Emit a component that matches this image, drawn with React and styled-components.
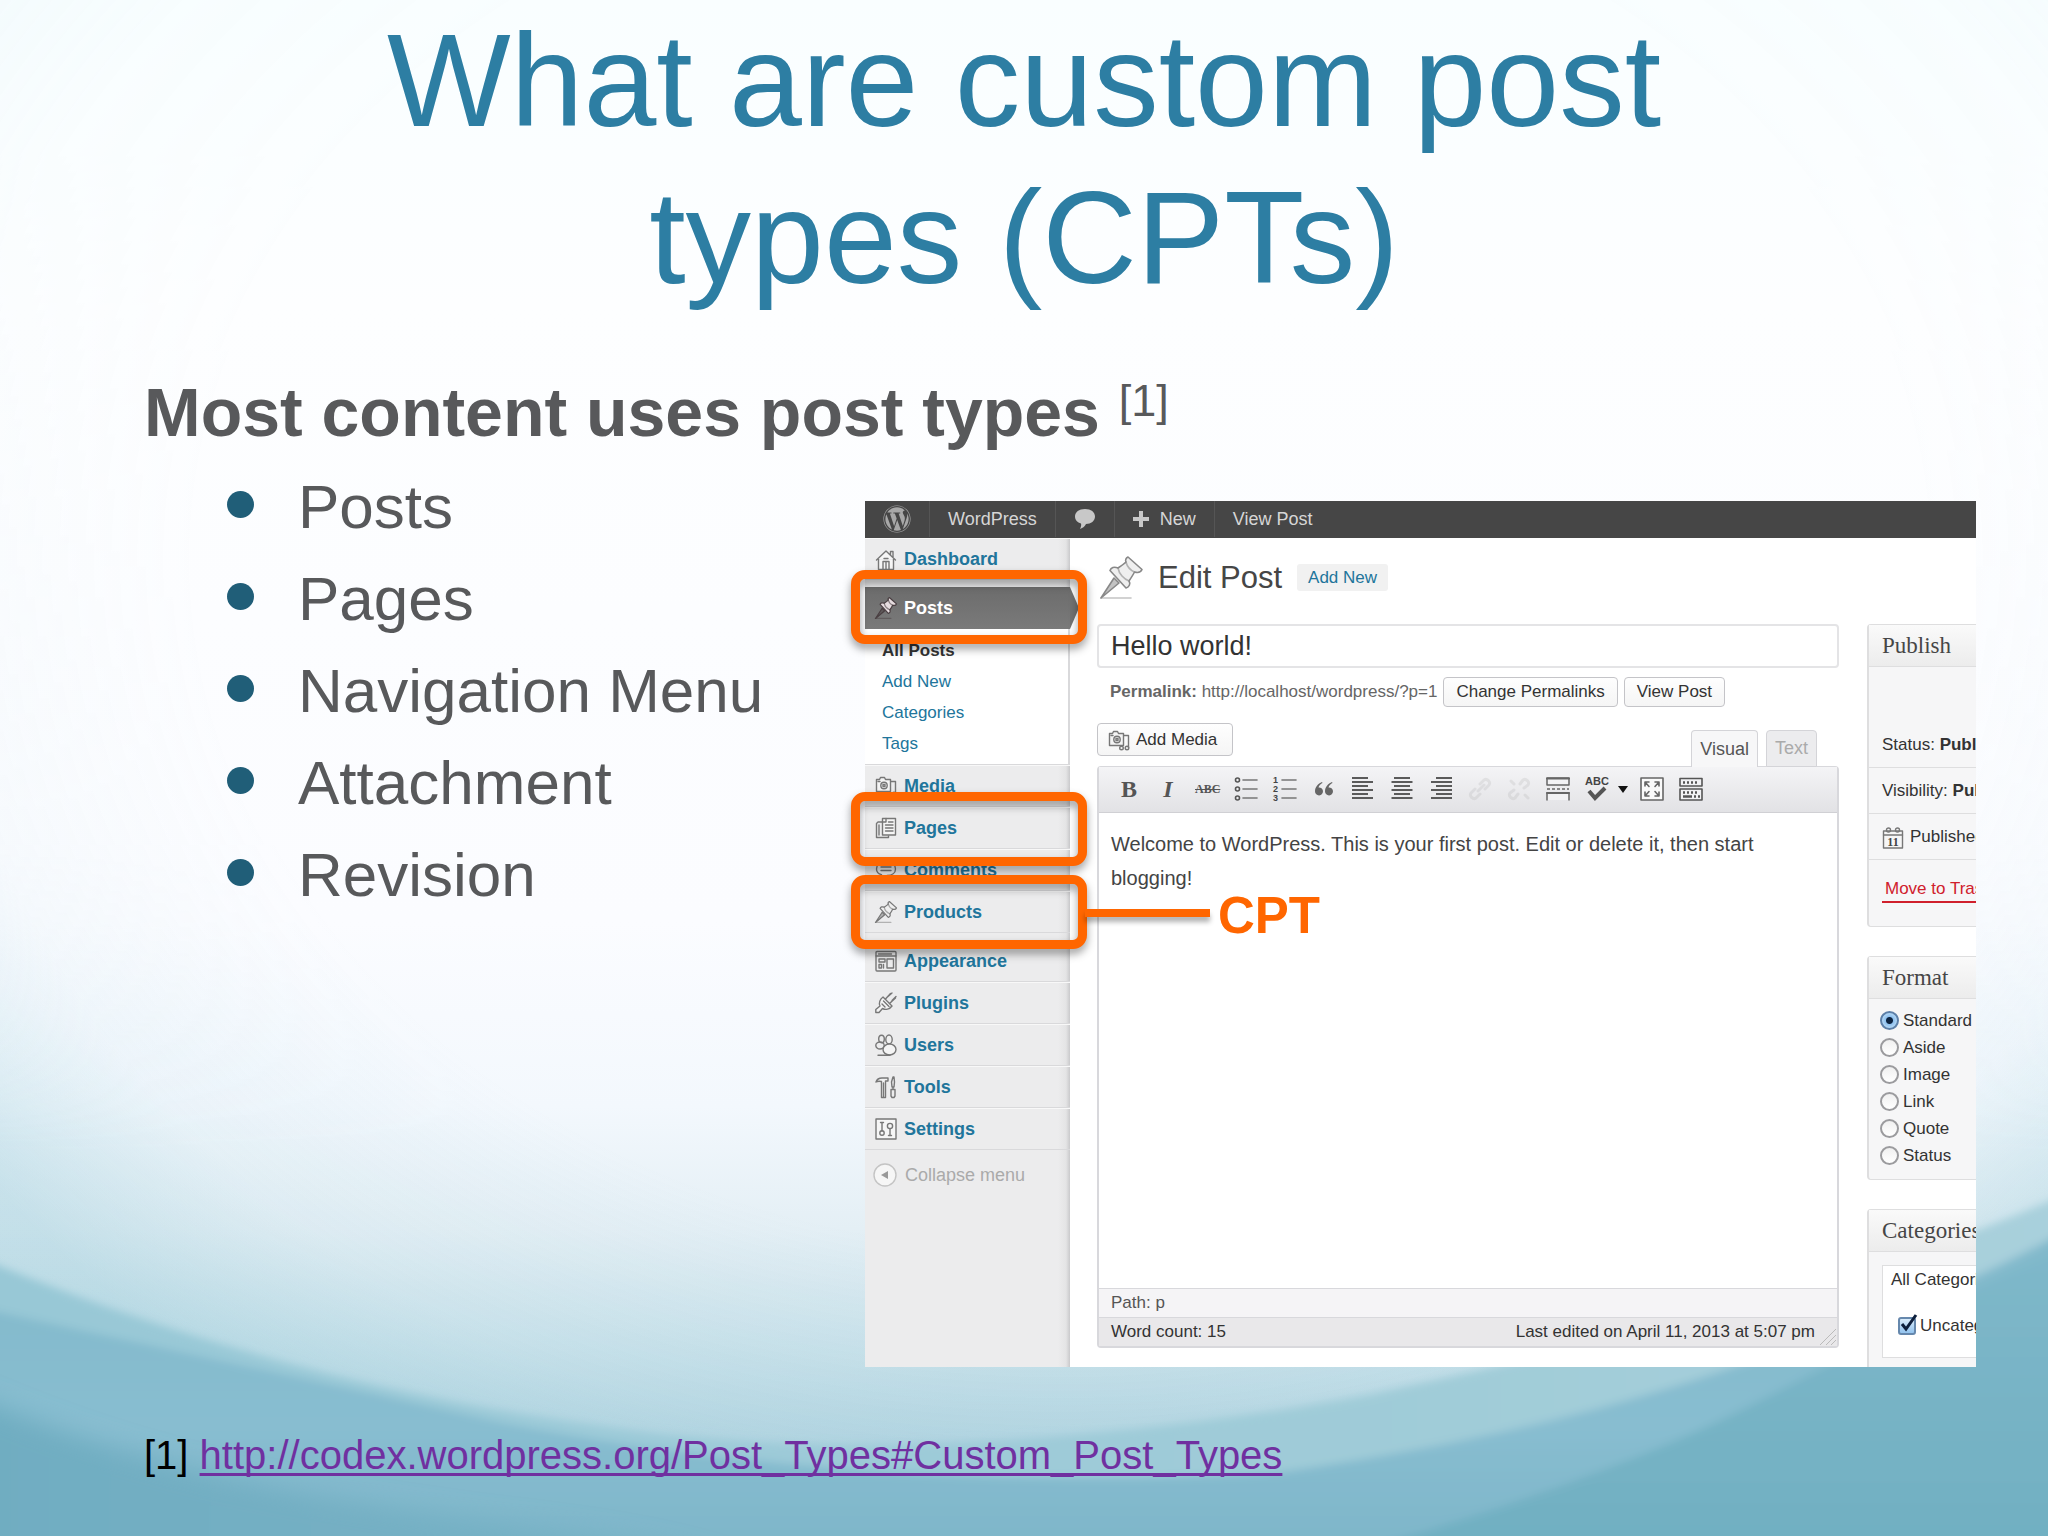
import React from "react";
import styled, { createGlobalStyle, css } from "styled-components";
import { FaWordpress } from "react-icons/fa";

const sans = `"Liberation Sans", Arial, Helvetica, sans-serif`;
const serif = `"Liberation Serif", "Times New Roman", serif`;
const orange = "#ff6600";
const linkBlue = "#21759b";

const GlobalStyle = createGlobalStyle`
  *, *::before, *::after { box-sizing: border-box; }
  body { margin: 0; font-family: ${sans}; }
  button, input, textarea { font-family: inherit; }
`;

/* ---------- slide ---------- */

const Slide = styled.main`
  position: relative;
  min-height: 100vh;
  overflow: hidden;
  padding: 2px 72px 0 144px;
  background: #fdfefe;
`;

const Waves = styled.svg`
  position: absolute;
  inset: 0;
  width: 100%;
  height: 100%;
`;

const Content = styled.div`
  position: relative;
`;

const Title = styled.h1`
  max-width: 1400px;
  margin: 0 auto 57px;
  padding-right: 72px;
  box-sizing: content-box;
  color: #2d7ea3;
  font-size: 131px;
  font-weight: 400;
  line-height: 157px;
  text-align: center;
`;

const Heading = styled.h2`
  margin: 0 0 10px;
  color: #58595b;
  font-size: 68px;
  line-height: 78px;
`;

const Reference = styled.sup`
  font-size: 45px;
  font-weight: 400;
  line-height: 0;
  vertical-align: 20px;
`;

const Columns = styled.div`
  display: grid;
  grid-template-columns: minmax(0, 721fr) minmax(0, 1111fr);
  align-items: start;
`;

const Bullets = styled.ul`
  margin: 0;
  padding: 0 0 0 83px;
  list-style: none;
`;

const Bullet = styled.li`
  display: flex;
  align-items: center;
  gap: 44px;
  color: #58595b;
  font-size: 62px;
  line-height: 92px;
  &::before {
    content: "";
    flex: none;
    width: 27px;
    height: 27px;
    margin-bottom: 6px;
    border-radius: 50%;
    background: #205e78;
  }
`;

const Footnote = styled.p`
  margin: 65px 0 0;
  color: #000;
  font-size: 40px;
  line-height: 46px;
`;

const FootLink = styled.a`
  color: #7030a0;
  text-decoration: underline;
  text-decoration-thickness: 3px;
  text-decoration-skip-ink: none;
  text-underline-offset: 4px;
`;

/* ---------- annotated admin screen ---------- */

const Figure = styled.figure`
  position: relative;
  margin: 40px 0 0;
`;

const Screen = styled.div`
  overflow: hidden;
  background: #fff;
  color: #333;
  font-size: 17px;
  line-height: 24px;
`;

const Highlight = styled.div`
  position: absolute;
  top: ${(p) => p.$top}px;
  left: -14px;
  width: 236px;
  height: 74px;
  border: 9px solid ${orange};
  border-radius: 14px;
  pointer-events: none;
  filter: drop-shadow(0 5px 4px rgba(0, 0, 0, 0.38));
`;

const Connector = styled.div`
  position: absolute;
  top: 408px;
  left: 220px;
  width: 125px;
  height: 8px;
  background: ${orange};
  box-shadow: 0 5px 5px rgba(0, 0, 0, 0.3);
`;

const Callout = styled.figcaption`
  position: absolute;
  top: 386px;
  left: 353px;
  color: ${orange};
  font-size: 51px;
  font-weight: 700;
  line-height: 58px;
`;

const AdminBar = styled.header`
  display: flex;
  height: 37px;
  padding-bottom: 1px;
  background: #464646;
`;

const BarLink = styled.a`
  display: flex;
  align-items: center;
  gap: 11px;
  padding: 0 18px;
  border-left: 1px solid #555;
  color: #d6d6d6;
  font-size: 18px;
  text-decoration: none;
  white-space: nowrap;
  &:first-child { border-left: 0; }
`;

const AdminBody = styled.div`
  display: grid;
  grid-template-columns: 205px minmax(0, 1fr);
`;

const Sidebar = styled.nav`
  background: linear-gradient(to left, #c9c9cb 0, #e4e4e5 4px, #ececed 12px);
`;

const MenuGroup = styled.ul`
  margin: 0 0 7px;
  padding: 0;
  list-style: none;
`;

const MenuLink = styled.a`
  position: relative;
  display: flex;
  align-items: center;
  gap: 7px;
  height: 42px;
  padding: 0 10px;
  border-bottom: 1px solid #d9d9db;
  box-shadow: inset 0 1px 0 #f8f8f8;
  color: ${linkBlue};
  font-size: 18px;
  font-weight: 700;
  text-decoration: none;
  ${(p) =>
    p.$current &&
    css`
      border: 0;
      box-shadow: none;
      background: linear-gradient(#6c6c6c, #7a7a7a);
      color: #fff;
      &::after {
        content: "";
        position: absolute;
        top: 0;
        left: 100%;
        border: solid transparent;
        border-width: 21px 0 21px 9px;
        border-left-color: #727272;
      }
    `}
`;

const SubMenu = styled.ul`
  margin: 0;
  padding: 6px 0 5px 17px;
  border-right: 2px solid #d9d9db;
  border-bottom: 1px solid #d9d9db;
  background: #fff;
  list-style: none;
`;

const SubLink = styled.a`
  display: block;
  color: ${(p) => (p.$current ? "#333" : linkBlue)};
  font-weight: ${(p) => (p.$current ? 700 : 400)};
  line-height: 31px;
  text-decoration: none;
`;

const CollapseButton = styled.button`
  display: flex;
  align-items: center;
  gap: 8px;
  margin: 12px 0 0;
  padding: 0 8px;
  border: 0;
  background: none;
  color: #aaa;
  font-size: 18px;
  line-height: 26px;
`;

const Workspace = styled.section`
  padding: 18px 0 0 27px;
`;

const PageHead = styled.div`
  display: flex;
  align-items: center;
  height: 43px;
  margin-bottom: 25px;
  padding-left: 3px;
`;

const PageTitle = styled.h3`
  margin: 0 15px;
  color: #464646;
  font-size: 31px;
  font-weight: 400;
  line-height: 36px;
`;

const AddNew = styled.a`
  padding: 0 11px;
  border-radius: 3px;
  background: #f1f1f1;
  color: ${linkBlue};
  line-height: 27px;
  text-decoration: none;
`;

const EditGrid = styled.div`
  display: grid;
  grid-template-columns: minmax(0, 1fr) 109px;
  gap: 28px;
`;

const TitleInput = styled.input`
  display: block;
  width: 100%;
  height: 44px;
  padding: 0 12px;
  border: 2px solid #e4e4e6;
  border-radius: 4px;
  color: #333;
  font-size: 27px;
`;

const Permalink = styled.div`
  display: flex;
  align-items: center;
  gap: 6px;
  margin: 9px 0 16px;
  padding-left: 13px;
  color: #666;
  white-space: nowrap;
`;

const Button = styled.button`
  display: flex;
  align-items: center;
  gap: 6px;
  height: ${(p) => (p.$tall ? 33 : 30)}px;
  padding: 0 ${(p) => (p.$tall ? "15px 0 10px" : "12px")};
  border: 1px solid #c4c4c8;
  border-radius: 4px;
  background: linear-gradient(#fefefe, #f5f5f5);
  color: #333;
  font-size: 17px;
`;

const EditorTop = styled.div`
  display: flex;
  align-items: flex-start;
  height: 43px;
`;

const Tabs = styled.div`
  display: flex;
  align-self: flex-end;
  gap: 8px;
  margin: 0 22px -1px auto;
`;

const Tab = styled.button`
  height: 37px;
  padding: 0 8px;
  border: 1px solid #d4d4d8;
  border-bottom: ${(p) => (p.$active ? "0" : "1px solid #d4d4d8")};
  border-radius: 4px 4px 0 0;
  background: ${(p) => (p.$active ? "#f7f7f8" : "#ececee")};
  color: ${(p) => (p.$active ? "#555" : "#aaa")};
  font-size: 18px;
`;

const Editor = styled.div`
  border: 2px solid #d8d8dc;
  border-top-width: 1px;
  border-radius: 4px;
`;

const Toolbar = styled.div`
  display: flex;
  align-items: center;
  gap: 15px;
  height: 46px;
  padding: 0 0 1px 18px;
  border-bottom: 1px solid #d0d0d4;
  background: linear-gradient(#f4f4f6, #e2e2e5);
`;

const Tool = styled.button`
  display: grid;
  place-items: center;
  flex: none;
  width: ${(p) => (p.$narrow ? 10 : 24)}px;
  height: 24px;
  padding: 0;
  border: 0;
  background: none;
  color: #555;
  font-family: ${serif};
  font-size: ${(p) => (p.$small ? 12 : 24)}px;
  font-weight: 700;
  font-style: ${(p) => (p.$italic ? "italic" : "normal")};
  text-decoration: ${(p) => (p.$small ? "line-through" : "none")};
  line-height: 24px;
  opacity: ${(p) => (p.disabled ? 0.14 : 1)};
`;

const ToolPair = styled.div`
  display: flex;
  gap: 9px;
  width: 40px;
`;

const PostText = styled.textarea`
  display: block;
  width: 100%;
  height: 475px;
  padding: 14px 12px;
  border: 0;
  resize: none;
  background: #fff;
  color: #444;
  font-size: 20px;
  line-height: 34px;
`;

const StatusRow = styled.div`
  display: flex;
  align-items: center;
  justify-content: space-between;
  height: 29px;
  padding: 0 22px 0 12px;
  border-top: 1px solid #d8d8dc;
  background: ${(p) => (p.$dark ? "#e9e8ea" : "#f5f4f6")};
  color: ${(p) => (p.$dark ? "#333" : "#555")};
`;

const ResizeMark = styled.svg`
  position: absolute;
  right: 1px;
  bottom: 1px;
`;

const StatusWrap = styled.div`
  position: relative;
`;

const MainColumn = styled.div`
  padding-bottom: 18px;
`;

const SideColumn = styled.aside`
  display: flex;
  flex-direction: column;
  gap: 29px;
  overflow: hidden;
  white-space: nowrap;
`;

const PostBox = styled.section`
  border: solid #dededf;
  border-width: 1px 0 ${(p) => (p.$open ? "0" : "1px")} 2px;
  border-radius: 4px 0 0 ${(p) => (p.$open ? "0" : "4px")};
  background: #f6f6f7;
`;

const BoxTitle = styled.h4`
  margin: 0;
  padding-left: 13px;
  border-bottom: 1px solid #dededf;
  background: linear-gradient(#fafafa, #ececec);
  color: #464646;
  font-family: ${serif};
  font-size: 23px;
  font-weight: 400;
  line-height: 41px;
`;

const BoxRow = styled.div`
  display: flex;
  align-items: flex-end;
  gap: 6px;
  height: ${(p) => p.$height}px;
  padding: 0 0 ${(p) => p.$bottom || 10}px 13px;
  border-bottom: ${(p) => (p.$last ? "0" : "1px solid #dededf")};
`;

const TrashLink = styled.a`
  padding: 0 3px;
  border-bottom: 2px solid #d0202c;
  color: #d0202c;
  text-decoration: none;
`;

const FormatList = styled.fieldset`
  margin: 0;
  padding: 8px 0 10px 11px;
  border: 0;
`;

const Choice = styled.label`
  display: flex;
  align-items: center;
  gap: 4px;
  line-height: 27px;
`;

const Radio = styled.input`
  appearance: none;
  flex: none;
  width: 19px;
  height: 19px;
  margin: 0;
  border: 2px solid #9b9b9e;
  border-radius: 50%;
  background: linear-gradient(#f0f0f0, #fff);
  &:checked {
    border-color: #5c7fa8;
    background: radial-gradient(circle, #0c2340 0 3px, #8fc0ee 4px, #b9dcf8 8px);
  }
`;

const CategoryBody = styled.div`
  padding: 13px 0 9px 13px;
`;

const CategoryPanel = styled.div`
  height: 93px;
  padding: 2px 0 0 8px;
  border: solid #dededf;
  border-width: 1px 0 1px 1px;
  background: #fff;
`;

const CategoryChoice = styled(Choice)`
  padding: 20px 0 0 7px;
`;

const CheckWrap = styled.span`
  position: relative;
  display: flex;
`;

const Checkbox = styled.input`
  appearance: none;
  width: 18px;
  height: 18px;
  margin: 0;
  border: 2px solid #6688ad;
  border-radius: 3px;
  background: linear-gradient(#d9ecfb, #93c3ee);
`;

const Tick = styled.svg`
  position: absolute;
  left: 1px;
  bottom: 2px;
  pointer-events: none;
`;

/* ---------- drawings ---------- */

const IconSvg = styled.svg`
  flex: none;
  overflow: visible;
`;

const Icon = ({ children, size = 22, box = 22, color = "#777", width = 1.4 }) => (
  <IconSvg
    width={size}
    height={size}
    viewBox={`0 0 ${box} ${box}`}
    fill="none"
    stroke={color}
    strokeWidth={width}
    strokeLinejoin="round"
    strokeLinecap="round"
    aria-hidden="true"
  >
    {children}
  </IconSvg>
);

const PinIcon = ({ size = 22, color = "#777", fill = "#efefef", width = 2.4 }) => (
  <Icon size={size} box={43} color={color} width={width}>
    <path d="M1 42h30" opacity="0.500" />
    <path d="M14 22L1 42L19 27z" fill={color} fillOpacity="0.500" />
    <path
      d="M28 1L42 13.500C41 16 38 17 34.500 16C33 19 31 22 29 25C31 28 29 31 26 32L10 14.500C11 11.500 14 10.500 18 12C21 10 24 8 26 6C25 4 26 2 28 1z"
      fill={fill}
    />
    <path d="M18 12C19 18 24 23 29 25M26 6C27 10 30 14 34.500 16" opacity="0.600" />
  </Icon>
);

const icons = {
  home: (
    <>
      <path d="M1.500 12L11 3l9.500 9M3.500 11v10.500h15V11M15.500 7V3.500h2.500V9" fill="#f6f6f6" />
      <path d="M8 21.500v-8h6v8M11 13.500v8M9 10.500h4" />
    </>
  ),
  media: (
    <>
      <path d="M1.500 4.500h3l1-2h4l1 2h5v12h-14z" fill="#f4f4f4" />
      <path d="M16 6.500h4.500v12M3 6.500h2" />
      <circle cx="9" cy="10.500" r="3.200" />
      <rect x="8" y="9.500" width="2" height="2" />
      <circle cx="13.500" cy="19" r="1.800" />
      <circle cx="19" cy="19" r="1.800" />
    </>
  ),
  pages: (
    <>
      <path d="M7 5H3L1.500 6.500v14h12V19" />
      <path d="M7.500 1.500h13V18H7.500z" fill="#f6f6f6" />
      <path d="M11 1.500V5H7.500M13.500 5h4.500M10.500 8H18M10.500 11H18M10.500 14H18M4 8v10" />
    </>
  ),
  comments: (
    <>
      <path d="M11 3c6 0 9.500 3 9.500 7S17 16.500 12 16.500L6.500 20v-4.300C3 14.700 1.500 12.500 1.500 10 1.500 6 5 3 11 3z" />
      <path d="M6 8h10M6 11.500h10" />
    </>
  ),
  appearance: (
    <>
      <rect x="1" y="1.500" width="20" height="19.500" rx="1" />
      <path d="M1 6h20M3.500 4h13M4 9h6v3H4zM12 9h6.500v9H12zM4 14.500h2.500v3.500H4zM8.500 14.500v3.500" />
    </>
  ),
  plugins: (
    <>
      <path d="M8 5l9 9c-2.500 3.500-6.500 4-9.500 2.500l-3.500 4H.8v-3L5 14C3.500 11 5 7 8 5z" fill="#f4f4f4" />
      <path d="M10.500 7l5-5.500M14.500 11.500l6-5.500M8.500 9l5.500 5.500M13 4.500l4-3.500M17 8.500l4-4M7 12l3 3" />
    </>
  ),
  users: (
    <>
      <ellipse cx="6.500" cy="5" rx="2.800" ry="3.800" />
      <ellipse cx="5" cy="11.500" rx="4.200" ry="3.500" />
      <ellipse cx="14" cy="5.500" rx="3.200" ry="4.500" fill="#f0f0f0" />
      <ellipse cx="14.500" cy="15.500" rx="6.500" ry="5.500" fill="#f4f4f4" />
      <path d="M3 21.300h12" />
    </>
  ),
  tools: (
    <>
      <path d="M1 6c1-3 3-4 6-4h6v3h-2.500v16.500h-4V5.500C4 5 2.500 5 1 6z" fill="#f2f2f2" />
      <path d="M8.500 7v14M18 1l1 0 .5 5-.5 5h-2l-.5-5zM18 11v2M16 13.500h4v6.500l-1 1.500h-2L16 20z" />
    </>
  ),
  settings: (
    <>
      <rect x="1" y="1" width="20" height="20" fill="#f6f6f6" />
      <path d="M7 4.500v8.500M5.500 4.500h3M15 10.500v7M13.500 17.500h3" />
      <circle cx="7" cy="15" r="2.200" />
      <circle cx="15" cy="8" r="2.600" />
    </>
  ),
};

const MenuIcon = ({ name }) => (name === "pin" ? <PinIcon /> : <Icon>{icons[name]}</Icon>);

const AlignIcon = ({ mode }) => (
  <Icon size={24} box={24} color="#5a5a5a" width={2}>
    {[1, 5, 9, 13, 17, 21].map((y, i) => {
      const w = i % 2 ? 21 : 16;
      const x = mode === "left" ? 1 : mode === "right" ? 23 - w : 12 - w / 2;
      return <path key={y} d={`M${x} ${y}h${w}`} strokeLinecap="butt" />;
    })}
  </Icon>
);

const ListIcon = ({ numbered }) => (
  <Icon size={24} box={24} color="#777" width={1.6}>
    {[3, 12, 21].map((y, i) => (
      <g key={y}>
        <path d={`M9 ${y}h14`} />
        {numbered ? (
          <text x="0" y={y + 3} fontSize="9" fontWeight="700" fontFamily={sans} fill="#444" stroke="none">
            {i + 1}
          </text>
        ) : (
          <circle cx="3.500" cy={y} r="2" stroke="#555" />
        )}
      </g>
    ))}
  </Icon>
);

const Background = () => (
  <Waves viewBox="0 0 2048 1536" preserveAspectRatio="none" aria-hidden="true">
    <defs>
      <linearGradient id="sky" x1="0" y1="0" x2="0" y2="1">
        <stop offset="0" stopColor="#f9feff" />
        <stop offset="0.200" stopColor="#fdfeff" />
        <stop offset="0.600" stopColor="#fbfcff" />
        <stop offset="0.720" stopColor="#f3f8fd" />
        <stop offset="0.800" stopColor="#e4eff5" />
        <stop offset="0.880" stopColor="#c8e1ea" />
        <stop offset="0.960" stopColor="#abd0de" />
      </linearGradient>
      <radialGradient id="edge" gradientUnits="userSpaceOnUse" cx="0" cy="0" r="1" gradientTransform="translate(1060 560) scale(1320 1060)">
        <stop offset="0.650" stopColor="#a5d2de" stopOpacity="0" />
        <stop offset="0.850" stopColor="#a5d2de" stopOpacity="0.120" />
        <stop offset="1" stopColor="#98cad8" stopOpacity="0.420" />
      </radialGradient>
      <linearGradient id="edgeFade" x1="0" y1="0" x2="0" y2="1">
        <stop offset="0.100" stopColor="#fff" stopOpacity="0.150" />
        <stop offset="0.550" stopColor="#fff" stopOpacity="0.500" />
        <stop offset="0.750" stopColor="#fff" stopOpacity="1" />
      </linearGradient>
      <mask id="edgeMask">
        <rect width="2048" height="1536" fill="url(#edgeFade)" />
      </mask>
      <linearGradient id="band" x1="0" y1="0" x2="1" y2="0">
        <stop offset="0" stopColor="#98c8d6" />
        <stop offset="0.300" stopColor="#9ccad8" />
        <stop offset="0.700" stopColor="#a0ccd8" />
        <stop offset="1" stopColor="#a9d0dc" />
      </linearGradient>
      <linearGradient id="deep" x1="0" y1="0" x2="0" y2="1">
        <stop offset="0" stopColor="#82b9cb" />
        <stop offset="0.600" stopColor="#88bdd0" />
        <stop offset="1" stopColor="#7db5c9" />
      </linearGradient>
      <linearGradient id="deeper" x1="0" y1="0" x2="0" y2="1">
        <stop offset="0" stopColor="#7fb8ca" />
        <stop offset="1" stopColor="#70afc1" />
      </linearGradient>
      <linearGradient id="corner" x1="0" y1="0" x2="1" y2="0">
        <stop offset="0" stopColor="#70adc1" />
        <stop offset="1" stopColor="#78b2c6" />
      </linearGradient>
      <filter id="soft">
        <feGaussianBlur stdDeviation="4" />
      </filter>
      <filter id="softer">
        <feGaussianBlur stdDeviation="12" />
      </filter>
    </defs>
    <rect width="2048" height="1536" fill="url(#sky)" />
    <rect width="2048" height="1536" fill="url(#edge)" mask="url(#edgeMask)" />
    <g filter="url(#soft)">
      <path d="M-20 1258C200 1350 420 1405 660 1434 900 1462 1180 1430 1368 1395 1620 1340 1860 1285 2070 1192V1560H-20z" fill="url(#band)" />
      <path d="M-20 1308C150 1345 340 1387 500 1422 720 1466 1000 1490 1281 1472 1500 1440 1640 1400 1760 1358 1880 1318 1970 1285 2070 1228V1560H-20z" fill="url(#deep)" />
      <path d="M1380 1545C1500 1510 1640 1460 1735 1413 1860 1350 1960 1290 2070 1246V1560z" fill="url(#deeper)" />
    </g>
    <g filter="url(#softer)">
      <path d="M-40 1390C100 1450 220 1487 494 1523 600 1535 700 1550 760 1580H-40z" fill="url(#corner)" />
    </g>
  </Waves>
);

/* ---------- data ---------- */

const bullets = ["Posts", "Pages", "Navigation Menu", "Attachment", "Revision"];
const subLinks = ["All Posts", "Add New", "Categories", "Tags"];
const contentMenu = [
  ["media", "Media"],
  ["pages", "Pages"],
  ["comments", "Comments"],
  ["pin", "Products"],
];
const siteMenu = [
  ["appearance", "Appearance"],
  ["plugins", "Plugins"],
  ["users", "Users"],
  ["tools", "Tools"],
  ["settings", "Settings"],
];
const formats = ["Standard", "Aside", "Image", "Link", "Quote", "Status"];

const Menu = ({ items }) => (
  <MenuGroup>
    {items.map(([icon, label]) => (
      <li key={label}>
        <MenuLink href="#">
          <MenuIcon name={icon} />
          {label}
        </MenuLink>
      </li>
    ))}
  </MenuGroup>
);

const AdminMenu = () => (
  <Sidebar aria-label="Admin menu">
    <Menu items={[["home", "Dashboard"]]} />
    <MenuLink href="#" $current>
      <PinIcon color="#4a3f42" fill="#e6dcdf" />
      Posts
    </MenuLink>
    <SubMenu>
      {subLinks.map((label, i) => (
        <li key={label}>
          <SubLink href="#" $current={i === 0}>
            {label}
          </SubLink>
        </li>
      ))}
    </SubMenu>
    <Menu items={contentMenu} />
    <Menu items={siteMenu} />
    <CollapseButton type="button">
      <Icon size={24} box={24} color="#c4c4c4">
        <circle cx="12" cy="12" r="11" fill="#f6f6f6" />
        <path d="M15 8v8l-7-4z" fill="#999" stroke="none" />
      </Icon>
      Collapse menu
    </CollapseButton>
  </Sidebar>
);

const EditorToolbar = () => (
  <Toolbar role="toolbar" aria-label="Formatting">
    <Tool type="button">B</Tool>
    <Tool type="button" $italic>I</Tool>
    <Tool type="button" $small>ABC</Tool>
    <Tool type="button" aria-label="Bulleted list"><ListIcon /></Tool>
    <Tool type="button" aria-label="Numbered list"><ListIcon numbered /></Tool>
    <Tool type="button" aria-label="Quote">
      <svg width="20" height="16" viewBox="0 0 20 16" fill="#666" aria-hidden="true">
        <path d="M8 1C4 2.500 1 6 1 10.500a4 4 0 1 0 3.500-4C5 4.500 6.500 3 8.500 2zM18 1c-4 1.500-7 5-7 9.500a4 4 0 1 0 3.500-4c.5-2 2-3.500 4-4.500z" />
      </svg>
    </Tool>
    <Tool type="button" aria-label="Align left"><AlignIcon mode="left" /></Tool>
    <Tool type="button" aria-label="Align center"><AlignIcon mode="center" /></Tool>
    <Tool type="button" aria-label="Align right"><AlignIcon mode="right" /></Tool>
    <Tool type="button" aria-label="Link" disabled>
      <Icon size={24} box={24} color="#888" width={3}>
        <path d="M10 14l6-6M12 7l4-4c3-2 7 2 5 5l-4 4M12 17l-4 4c-3 2-7-2-5-5l4-4" />
      </Icon>
    </Tool>
    <Tool type="button" aria-label="Unlink" disabled>
      <Icon size={24} box={24} color="#888" width={3}>
        <path d="M13 7l3-4c3-2 7 2 5 5l-4 3M11 17l-3 4c-3 2-7-2-5-5l4-3M4 4l3 3M18 18l3 3" />
      </Icon>
    </Tool>
    <Tool type="button" aria-label="Insert more tag">
      <Icon size={24} box={24} color="#666" width={1.5}>
        <path d="M1 1h22v7H1zM1 23v-7h22v7" fill="#f2f2f4" />
        <path d="M1 1.500h22M1 16h22" strokeWidth="2" />
        <path d="M1 12h22" strokeDasharray="3 2" strokeLinecap="butt" />
      </Icon>
    </Tool>
    <ToolPair>
      <Tool type="button" aria-label="Check spelling">
        <Icon size={24} box={24} color="#555" width={4}>
          <text x="0" y="8" fontSize="11" fontWeight="700" fontFamily={sans} fill="#444" stroke="none">
            ABC
          </text>
          <path d="M4 14l6 7 10-10" strokeLinecap="butt" strokeLinejoin="miter" />
        </Icon>
      </Tool>
      <Tool type="button" $narrow aria-label="Spelling languages">
        <svg width="10" height="7" viewBox="0 0 10 7" aria-hidden="true">
          <path d="M0 0h10L5 7z" fill="#111" />
        </svg>
      </Tool>
    </ToolPair>
    <Tool type="button" aria-label="Full screen">
      <Icon size={24} box={24} color="#666" width={1.6}>
        <rect x="1" y="1" width="22" height="22" fill="#fafafa" />
        <path d="M9 9.500L5 5M5 9V5h4M15 9.500L19 5M15 5h4v4M9 14.500L5 19M5 15v4h4M15 14.500l4 4.500M19 15v4h-4" />
      </Icon>
    </Tool>
    <Tool type="button" aria-label="Show more tools">
      <Icon size={24} box={24} color="#555" width={1.6}>
        <path d="M1 1.500h22v7.500H1zM1 12h22v11H1z" fill="#f2f2f4" />
        <path d="M4 5.500h16M4 15.500h16" strokeDasharray="2 2" strokeWidth="2.500" strokeLinecap="butt" />
        <path d="M4 19.500h9M15 19.500h2M19 19.500h2" strokeWidth="2.500" strokeLinecap="butt" />
      </Icon>
    </Tool>
  </Toolbar>
);

const PostEditor = () => (
  <MainColumn>
    <TitleInput type="text" aria-label="Post title" defaultValue="Hello world!" />
    <Permalink>
      <span>
        <strong>Permalink:</strong> http://localhost/wordpress/?p=1
      </span>
      <Button type="button">Change Permalinks</Button>
      <Button type="button">View Post</Button>
    </Permalink>
    <EditorTop>
      <Button type="button" $tall>
        <MenuIcon name="media" />
        Add Media
      </Button>
      <Tabs>
        <Tab type="button" $active>Visual</Tab>
        <Tab type="button">Text</Tab>
      </Tabs>
    </EditorTop>
    <Editor>
      <EditorToolbar />
      <PostText
        aria-label="Post content"
        defaultValue="Welcome to WordPress. This is your first post. Edit or delete it, then start blogging!"
      />
      <StatusRow>Path: p</StatusRow>
      <StatusWrap>
        <StatusRow $dark>
          <span>Word count: 15</span>
          <span>Last edited on April 11, 2013 at 5:07 pm</span>
        </StatusRow>
        <ResizeMark width="17" height="17" viewBox="0 0 17 17" stroke="#bbb" aria-hidden="true">
          <path d="M1 17L17 1M7 17L17 7M12 17l5-5" />
        </ResizeMark>
      </StatusWrap>
    </Editor>
  </MainColumn>
);

const PostSettings = () => (
  <SideColumn>
    <PostBox>
      <BoxTitle>Publish</BoxTitle>
      <BoxRow $height={101}>
        <span>
          Status: <strong>Published</strong>
        </span>
      </BoxRow>
      <BoxRow $height={46}>
        <span>
          Visibility: <strong>Public</strong>
        </span>
      </BoxRow>
      <BoxRow $height={46}>
        <Icon>
          <path d="M1.500 4h19v17h-19z" fill="#f6f6f6" />
          <path d="M1.500 8h19" />
          <circle cx="6.500" cy="3" r="2" />
          <circle cx="15.500" cy="3" r="2" />
          <text x="11" y="19" textAnchor="middle" fontSize="12" fontWeight="700" fontFamily={serif} fill="#444" stroke="none">
            11
          </text>
        </Icon>
        Published
      </BoxRow>
      <BoxRow $height={66} $bottom={23} $last>
        <TrashLink href="#">Move to Trash</TrashLink>
      </BoxRow>
    </PostBox>
    <PostBox>
      <BoxTitle>Format</BoxTitle>
      <FormatList aria-label="Format">
        {formats.map((name) => (
          <Choice key={name}>
            <Radio type="radio" name="format" defaultChecked={name === "Standard"} />
            {name}
          </Choice>
        ))}
      </FormatList>
    </PostBox>
    <PostBox $open>
      <BoxTitle>Categories</BoxTitle>
      <CategoryBody>
        <CategoryPanel>
          All Categories
          <CategoryChoice>
            <CheckWrap>
              <Checkbox type="checkbox" defaultChecked />
              <Tick width="20" height="20" viewBox="0 0 20 20" fill="none" stroke="#0d1f3c" strokeWidth="3">
                <path d="M3 11l4 5L17 2" />
              </Tick>
            </CheckWrap>
            Uncategorized
          </CategoryChoice>
        </CategoryPanel>
      </CategoryBody>
    </PostBox>
  </SideColumn>
);

const AdminScreen = () => (
  <Screen>
    <AdminBar>
      <BarLink href="#" aria-label="About WordPress">
        <FaWordpress size={28} color="#a8a8a8" />
      </BarLink>
      <BarLink href="#">WordPress</BarLink>
      <BarLink href="#" aria-label="Comments">
        <svg width="22" height="20" viewBox="0 0 22 20" fill="#c8c8c8" aria-hidden="true">
          <path d="M11 0c6 0 10 3 10 7.500S17 15 12 15c-1 2-3 4-6 5 1-2 1.500-4 1-5.500C3.500 13.500 1 11 1 7.500 1 3 5 0 11 0z" />
        </svg>
      </BarLink>
      <BarLink href="#">
        <svg width="16" height="16" viewBox="0 0 16 16" fill="#c8c8c8" aria-hidden="true">
          <path d="M6 0h4v6h6v4h-6v6H6v-6H0V6h6z" />
        </svg>
        New
      </BarLink>
      <BarLink href="#">View Post</BarLink>
    </AdminBar>
    <AdminBody>
      <AdminMenu />
      <Workspace>
        <PageHead>
          <PinIcon size={43} color="#888" width={1.6} />
          <PageTitle>Edit Post</PageTitle>
          <AddNew href="#">Add New</AddNew>
        </PageHead>
        <EditGrid>
          <PostEditor />
          <PostSettings />
        </EditGrid>
      </Workspace>
    </AdminBody>
  </Screen>
);

export default function App() {
  return (
    <>
      <GlobalStyle />
      <Slide>
        <Background />
        <Content>
          <Title>What are custom post types (CPTs)</Title>
          <Heading>
            Most content uses post types <Reference>[1]</Reference>
          </Heading>
          <Columns>
            <Bullets>
              {bullets.map((text) => (
                <Bullet key={text}>{text}</Bullet>
              ))}
            </Bullets>
            <Figure>
              <AdminScreen />
              <Highlight $top={69} />
              <Highlight $top={291} />
              <Highlight $top={374} />
              <Connector />
              <Callout>CPT</Callout>
            </Figure>
          </Columns>
          <Footnote>
            [1] <FootLink href="http://codex.wordpress.org/Post_Types#Custom_Post_Types">http://codex.wordpress.org/Post_Types#Custom_Post_Types</FootLink>
          </Footnote>
        </Content>
      </Slide>
    </>
  );
}
